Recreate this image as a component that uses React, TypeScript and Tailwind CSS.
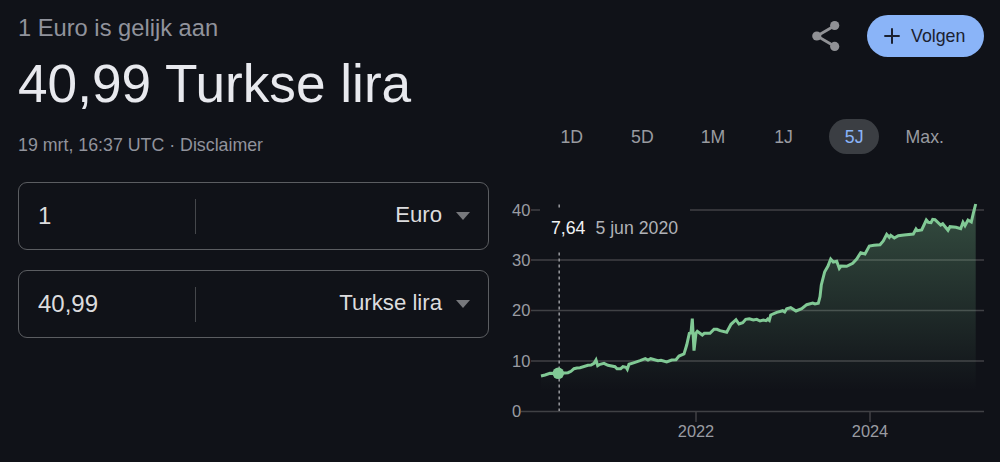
import clsx from "clsx"

const ranges = ["1D", "5D", "1M", "1J", "5J", "Max."]

const yTicks = [
  { label: "40", y: 25, start: 31 },
  { label: "30", y: 75, start: 31 },
  { label: "20", y: 125.5, start: 31 },
  { label: "10", y: 176, start: 31 },
  { label: "0", y: 226.5, start: 21 },
]

const xTicks = [
  { label: "2022", x: 196 },
  { label: "2024", x: 370 },
]

// EUR/TRY rate in chart coordinates
const points = [
  [41, 191], [45, 190], [50, 188.3], [58, 188.5], [68, 187.7], [71, 186.3], [74, 183.7], [77, 183],
  [80, 182.7], [88, 180.3], [91, 180], [94, 178.3], [96, 175], [97.7, 180.7], [100, 179.3], [104, 178.3],
  [108, 180.3], [115, 181.7], [117, 183.7], [120.7, 183.7], [123, 181.7], [126, 182.3], [127.3, 184.3],
  [129, 179.3], [135, 177.3], [140, 175.7], [145.3, 173.7], [148, 175], [150.7, 173.7], [158, 175.7],
  [161, 175.3], [166.7, 177], [171.7, 175], [176, 174.7], [179, 171], [184, 169], [186.7, 160],
  [189.3, 148.3], [191, 147.7], [192.3, 133.7], [194, 165.7], [196, 148], [197.3, 146.3], [202.3, 150],
  [204.3, 148.3], [210, 148.3], [214, 144.3], [217, 144.3], [220, 145.7], [226.7, 147.3], [231, 139.3],
  [236, 134.7], [239, 139], [242.7, 137.7], [245.7, 134.3], [249.3, 133.7], [253.3, 135], [256.7, 134.3],
  [260, 136], [263.3, 135], [266, 135.7], [267.7, 134], [269.3, 135.3], [270.7, 130], [276.7, 127.3],
  [282.7, 125.7], [284.7, 127], [286.7, 123.7], [290.7, 122.7], [296, 126], [301.7, 123.7], [306.7, 119.7],
  [312.7, 118], [315, 119], [318.3, 118.3], [320, 111.7], [321.3, 100], [324.7, 86.7], [328, 81],
  [330.7, 74], [333.3, 77], [336.7, 76.3], [339.3, 83.3], [341, 81], [346.7, 81.3], [352.7, 78.3],
  [356.7, 74], [360.7, 67.7], [365, 69], [369.3, 61], [374, 60.3], [380, 59.7], [383.3, 56],
  [386.7, 49.3], [389.3, 52.3], [390.7, 50.3], [394.3, 53], [398.3, 50.7], [404, 50], [413.3, 49],
  [416, 44], [417.3, 45.7], [421.7, 45], [426.3, 35], [428.3, 37.3], [431, 37.7], [432.7, 34.3],
  [435, 34.7], [440.7, 40], [442.7, 38.7], [448, 45.3], [450, 41.7], [456, 42.3], [460.7, 43.7],
  [463, 37.3], [465, 40.7], [468, 35], [471.3, 37], [473.3, 28.3], [475.7, 19],
]

const linePath = "M" + points.map((p) => p.join(" ")).join("L")

function ShareIcon() {
  return (
    <svg width="28" height="32" viewBox="0 0 28 32" className="text-[#909195]">
      <path d="M23 5.5 5 16l18 10.5" fill="none" stroke="currentColor" strokeWidth="2.8" />
      <circle cx="22.7" cy="5.5" r="4.6" fill="currentColor" />
      <circle cx="4.8" cy="16" r="4.6" fill="currentColor" />
      <circle cx="22.7" cy="26.4" r="4.6" fill="currentColor" />
    </svg>
  )
}

function PlusIcon() {
  return (
    <svg width="16" height="16" viewBox="0 0 16 16">
      <path d="M8 .3v15.4M.3 8h15.4" stroke="currentColor" strokeWidth="2" />
    </svg>
  )
}

function CurrencyField({ amount, currency }: { amount: string; currency: string }) {
  return (
    <div className="flex h-[68px] items-center rounded-[9px] border-[1.5px] border-[#5b5d61] pr-[17px] pl-[19px] text-[#dcdcde]">
      <div className="w-[157px] text-[24px]">{amount}</div>
      <div className="h-[35px] w-px bg-[#45474b]" />
      <button className="flex flex-1 items-center justify-end gap-[13px] text-[22.2px]">
        <span className="pb-[3px]">{currency}</span>
        <svg width="16" height="8" viewBox="0 0 16 8">
          <path d="M1 0h14L8 8z" fill="#77787c" />
        </svg>
      </button>
    </div>
  )
}

function RateChart() {
  return (
    <div className="relative h-[260px] w-[500px]">
      <svg width="500" height="260" viewBox="0 0 500 260">
        <defs>
          <linearGradient id="area" gradientUnits="userSpaceOnUse" x1="0" y1="19" x2="0" y2="226">
            <stop offset="0" stopColor="#81c995" stopOpacity="0.32" />
            <stop offset="0.9" stopColor="#81c995" stopOpacity="0" />
          </linearGradient>
        </defs>

        {/* Grid and axis labels */}
        {yTicks.map((tick) => (
          <g key={tick.label}>
            <path d={`M${tick.start} ${tick.y}H484`} stroke="#404145" strokeWidth="1.7" />
            <text x="12" y={tick.y + 5.5} fontSize="16.5" fill="#9a9ca2">
              {tick.label}
            </text>
          </g>
        ))}
        {xTicks.map((tick) => (
          <g key={tick.label}>
            <path d={`M${tick.x} 227V237`} stroke="#404145" strokeWidth="1.5" />
            <text x={tick.x} y="252" fontSize="16.4" fill="#9a9ca2" textAnchor="middle">
              {tick.label}
            </text>
          </g>
        ))}

        <path d={`${linePath}V226H41Z`} fill="url(#area)" />
        <path d="M59.2 19.5V226" stroke="#909196" strokeWidth="1.6" strokeDasharray="3 3" />
        <path d={linePath} fill="none" stroke="#81c995" strokeWidth="3" />
        <circle cx="58.3" cy="188.3" r="5.8" fill="#81c995" />
      </svg>

      {/* Tooltip */}
      <div className="absolute top-[23px] left-[40px] flex h-[43px] w-[150px] items-center gap-[10px] bg-[#101218] pb-0.5 pl-[11px] text-[17.7px] whitespace-nowrap">
        <span className="text-[#f1f2f4]">7,64</span>
        <span className="text-[#b0b2b7]">5 jun 2020</span>
      </div>
    </div>
  )
}

export default function App() {
  return (
    <main className="flex h-[462px] w-[1000px] overflow-hidden bg-[#101218] font-['Liberation_Sans',Arial,sans-serif]">
      <section className="w-[500px] pt-[14px] pr-[11px] pl-[18px]">
        <div className="text-[23.7px] leading-[28px] text-[#91939c]">1 Euro is gelijk aan</div>
        <h1 className="mt-3 text-[53.2px] leading-[60px] whitespace-nowrap text-[#e8e9ee]">40,99 Turkse lira</h1>
        <p className="mt-5 text-[17.8px] leading-[22px] text-[#91939c]">19 mrt, 16:37 UTC · Disclaimer</p>
        <div className="mt-[26px] flex flex-col gap-5">
          <CurrencyField amount="1" currency="Euro" />
          <CurrencyField amount="40,99" currency="Turkse lira" />
        </div>
      </section>

      <section className="flex w-[500px] flex-col">
        <div className="flex items-center justify-end gap-[27px] pt-[15px] pr-4">
          <button aria-label="Delen">
            <ShareIcon />
          </button>
          <button className="flex h-[42px] w-[117px] items-center gap-[11px] rounded-full bg-[#8ab4f8] pl-[17px] text-[17.8px] text-[#1b2130]">
            <PlusIcon />
            Volgen
          </button>
        </div>

        <nav className="mt-[62px] ml-[36.5px] flex text-[17.7px] text-[#999ba0]">
          {ranges.map((range) => (
            <div key={range} className="flex w-[70.6px] justify-center">
              <button
                className={clsx(
                  "h-[35px] rounded-full pt-px whitespace-nowrap",
                  range === "5J" && "w-[50px] bg-[#3b3e43] text-[#8ab4f8]",
                )}
              >
                {range}
              </button>
            </div>
          ))}
        </nav>

        <div className="mt-[31px]">
          <RateChart />
        </div>
      </section>
    </main>
  )
}
